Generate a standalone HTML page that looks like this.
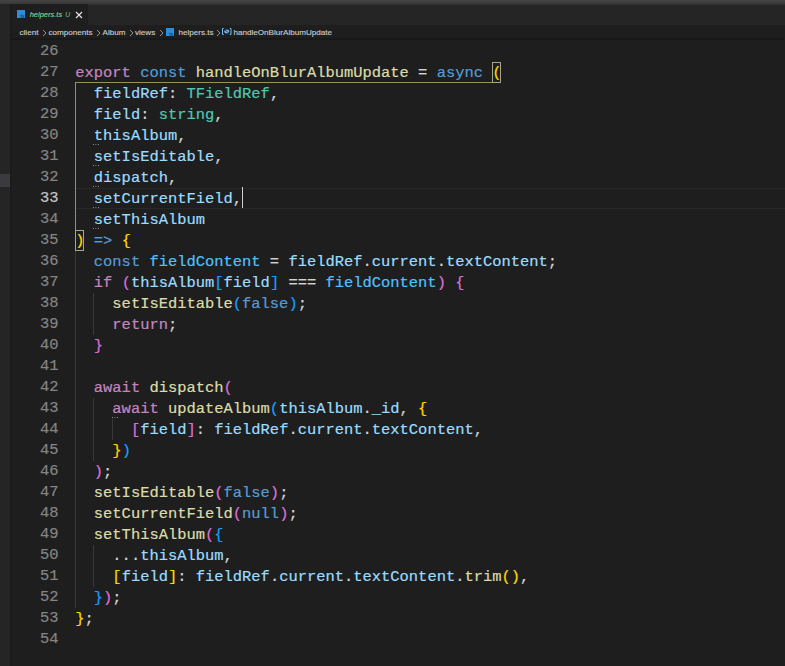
<!DOCTYPE html>
<html><head><meta charset="utf-8"><style>
*{margin:0;padding:0;box-sizing:border-box}
html,body{width:785px;height:666px;overflow:hidden;background:#1e1e1e}
body{position:relative;font-family:"Liberation Sans",sans-serif}
.topstrip{position:absolute;left:0;top:0;width:785px;height:5px;background:linear-gradient(#444 0,#3c3c3c 3px,#2e2e2e 5px)}
.tabbar{position:absolute;left:0;top:5px;width:785px;height:21px;background:#252526}
.side{position:absolute;left:0;top:4px;width:10px;height:662px;background:#252526}
.sideedge{position:absolute;left:10px;top:4px;width:2px;height:662px;background:#1b1b1b}
.sidehl{position:absolute;left:0;top:174px;width:10px;height:13px;background:#3a3a3f}
.tab{position:absolute;left:10px;top:4px;width:78px;height:21px;background:#1e1e1e}
.crumbs{position:absolute;left:12px;top:25px;width:773px;height:15px;background:#1e1e1e}
.shadow{position:absolute;left:11px;top:38px;width:773px;height:2px;background:#181818}
.ln,.cl{position:absolute;height:21px;line-height:21px;font-family:"Liberation Mono",monospace;font-size:15.45px;white-space:pre;-webkit-text-stroke:0.2px currentColor}
.ln{left:19px;width:39.5px;text-align:right;color:#858585}
.ln.cur{color:#c6c6c6}
.cl{left:75.3px;color:#d4d4d4;padding-top:1px}
.kw{color:#c586c0} .st{color:#569cd6} .fn{color:#dcdcaa} .v{color:#9cdcfe} .c{color:#4fc1ff} .ty{color:#4ec9b0} .p{color:#d4d4d4}
.b1,.b1box{color:#ffd700} .b2{color:#da70d6} .b3{color:#179fff}
.box{position:absolute;width:9px;height:21px;border:1px solid #a8a488}
.curline{position:absolute;left:75px;top:188px;width:721px;height:21px;border-top:1px solid #282828;border-bottom:1px solid #282828}
.cursor{position:absolute;left:242px;top:187px;width:1px;height:21px;background:#d0d0d0}
.hint{position:absolute;width:7px;height:1px;background-image:linear-gradient(90deg,#9a9a9a 40%,transparent 40%);background-size:2.5px 1px}
.ig{position:absolute;width:1px;background:#383838}
.bg{position:absolute;background:#9c8f5c}
.crumb{position:absolute;top:26.2px;height:13px;line-height:13px;font-size:8.1px;color:#c8c8c8;-webkit-text-stroke:0.15px currentColor;white-space:pre}
.chev{position:absolute;top:28.5px}
.tsicon{position:absolute;background:#2b8ddb;overflow:hidden}
.tsicon span{position:absolute;right:0.5px;bottom:-1.5px;font-size:4.5px;font-weight:bold;color:#0d3d66;line-height:5px}
.tablabel{position:absolute;height:12px;line-height:12px;font-size:7.5px;font-style:italic;color:#7fcf92;-webkit-text-stroke:0.15px currentColor;white-space:pre}
.tabU{position:absolute;height:12px;line-height:12px;font-size:6.8px;font-style:italic;color:#73c991}
</style></head><body>
<div class="topstrip"></div>
<div class="tabbar"></div>
<div class="tab"></div>
<div class="side"></div>
<div class="sideedge"></div>
<div class="sidehl"></div>
<div class="crumbs"></div>
<div class="shadow"></div>

<div class="tsicon" style="left:16.6px;top:9.7px;width:8.4px;height:8.2px"><span>ts</span></div>
<div class="tablabel" style="left:29.7px;top:9.3px">helpers.ts</div>
<div class="tabU" style="left:65.3px;top:9.4px">U</div>
<svg style="position:absolute;left:75px;top:10.5px" width="8" height="8" viewBox="0 0 8 8"><path d="M1 1L7 7M7 1L1 7" stroke="#e8e8e8" stroke-width="1.1"/></svg>
<div class="crumb" style="left:19.5px">client</div>
<svg class="chev" style="left:42px" width="5" height="8" viewBox="0 0 5 8"><path d="M1 1L4 4L1 7" fill="none" stroke="#b0b0b0" stroke-width="0.8"/></svg>
<div class="crumb" style="left:48.5px">components</div>
<svg class="chev" style="left:96px" width="5" height="8" viewBox="0 0 5 8"><path d="M1 1L4 4L1 7" fill="none" stroke="#b0b0b0" stroke-width="0.8"/></svg>
<div class="crumb" style="left:102.5px">Album</div>
<svg class="chev" style="left:129px" width="5" height="8" viewBox="0 0 5 8"><path d="M1 1L4 4L1 7" fill="none" stroke="#b0b0b0" stroke-width="0.8"/></svg>
<div class="crumb" style="left:135px">views</div>
<svg class="chev" style="left:158.5px" width="5" height="8" viewBox="0 0 5 8"><path d="M1 1L4 4L1 7" fill="none" stroke="#b0b0b0" stroke-width="0.8"/></svg>
<div class="tsicon" style="left:165.9px;top:28px;width:7.9px;height:7.7px"><span>ts</span></div>
<div class="crumb" style="left:178.5px">helpers.ts</div>
<svg class="chev" style="left:215.5px" width="5" height="8" viewBox="0 0 5 8"><path d="M1 1L4 4L1 7" fill="none" stroke="#b0b0b0" stroke-width="0.8"/></svg>
<svg style="position:absolute;left:222.3px;top:27.9px" width="10" height="7" viewBox="0 0 10 7"><path d="M1.7 0.5H0.5V6.5H1.7M7.8 0.5H9V6.5H7.8" fill="none" stroke="#75beff" stroke-width="1"/><ellipse cx="4.75" cy="3.5" rx="2.5" ry="2.1" fill="#78b8f2"/><path d="M3 2.2L6.5 4.7" stroke="#143060" stroke-width="0.9"/></svg>
<div class="crumb" style="left:233.5px">handleOnBlurAlbumUpdate</div>
<div class="curline"></div>
<div class="ig" style="left:93px;top:293px;height:42px"></div><div class="ig" style="left:93px;top:398px;height:63px"></div><div class="ig" style="left:112px;top:419px;height:21px"></div><div class="ig" style="left:93px;top:545px;height:42px"></div><div class="ig" style="left:75px;top:251px;height:357px"></div>
<div class="bg" style="left:75px;top:82px;width:417px;height:1px"></div>
<div class="bg" style="left:75px;top:82px;width:1px;height:148px"></div>
<div class="box" style="left:492px;top:62px"></div>
<div class="box" style="left:75px;top:230px"></div>
<div class="ln" style="top:41px">26</div>
<div class="cl" style="top:41px"></div>
<div class="ln" style="top:62px">27</div>
<div class="cl" style="top:62px"><span class="kw">export</span><span class="p"> </span><span class="st">const</span><span class="p"> </span><span class="fn">handleOnBlurAlbumUpdate</span><span class="p"> = </span><span class="st">async</span><span class="p"> </span><span class="b1box">(</span></div>
<div class="ln" style="top:83px">28</div>
<div class="cl" style="top:83px"><span class="p">  </span><span class="v">fieldRef</span><span class="p">: </span><span class="ty">TFieldRef</span><span class="p">,</span></div>
<div class="ln" style="top:104px">29</div>
<div class="cl" style="top:104px"><span class="p">  </span><span class="v">field</span><span class="p">: </span><span class="ty">string</span><span class="p">,</span></div>
<div class="ln" style="top:125px">30</div>
<div class="cl" style="top:125px"><span class="p">  </span><span class="v">thisAlbum</span><span class="p">,</span></div>
<div class="ln" style="top:146px">31</div>
<div class="cl" style="top:146px"><span class="p">  </span><span class="v">setIsEditable</span><span class="p">,</span></div>
<div class="ln" style="top:167px">32</div>
<div class="cl" style="top:167px"><span class="p">  </span><span class="v">dispatch</span><span class="p">,</span></div>
<div class="ln cur" style="top:188px">33</div>
<div class="cl" style="top:188px"><span class="p">  </span><span class="v">setCurrentField</span><span class="p">,</span></div>
<div class="ln" style="top:209px">34</div>
<div class="cl" style="top:209px"><span class="p">  </span><span class="v">setThisAlbum</span></div>
<div class="ln" style="top:230px">35</div>
<div class="cl" style="top:230px"><span class="b1box">)</span><span class="p"> </span><span class="st">=&gt;</span><span class="p"> </span><span class="b1">{</span></div>
<div class="ln" style="top:251px">36</div>
<div class="cl" style="top:251px"><span class="p">  </span><span class="st">const</span><span class="p"> </span><span class="c">fieldContent</span><span class="p"> = </span><span class="v">fieldRef</span><span class="p">.</span><span class="v">current</span><span class="p">.</span><span class="v">textContent</span><span class="p">;</span></div>
<div class="ln" style="top:272px">37</div>
<div class="cl" style="top:272px"><span class="p">  </span><span class="kw">if</span><span class="p"> </span><span class="b2">(</span><span class="v">thisAlbum</span><span class="b3">[</span><span class="v">field</span><span class="b3">]</span><span class="p"> === </span><span class="c">fieldContent</span><span class="b2">)</span><span class="p"> </span><span class="b2">{</span></div>
<div class="ln" style="top:293px">38</div>
<div class="cl" style="top:293px"><span class="p">    </span><span class="fn">setIsEditable</span><span class="b3">(</span><span class="st">false</span><span class="b3">)</span><span class="p">;</span></div>
<div class="ln" style="top:314px">39</div>
<div class="cl" style="top:314px"><span class="p">    </span><span class="kw">return</span><span class="p">;</span></div>
<div class="ln" style="top:335px">40</div>
<div class="cl" style="top:335px"><span class="p">  </span><span class="b2">}</span></div>
<div class="ln" style="top:356px">41</div>
<div class="cl" style="top:356px"></div>
<div class="ln" style="top:377px">42</div>
<div class="cl" style="top:377px"><span class="p">  </span><span class="kw">await</span><span class="p"> </span><span class="fn">dispatch</span><span class="b2">(</span></div>
<div class="ln" style="top:398px">43</div>
<div class="cl" style="top:398px"><span class="p">    </span><span class="kw">await</span><span class="p"> </span><span class="fn">updateAlbum</span><span class="b3">(</span><span class="v">thisAlbum</span><span class="p">.</span><span class="v">_id</span><span class="p">, </span><span class="b1">{</span></div>
<div class="ln" style="top:419px">44</div>
<div class="cl" style="top:419px"><span class="p">      </span><span class="b2">[</span><span class="v">field</span><span class="b2">]</span><span class="p">: </span><span class="v">fieldRef</span><span class="p">.</span><span class="v">current</span><span class="p">.</span><span class="v">textContent</span><span class="p">,</span></div>
<div class="ln" style="top:440px">45</div>
<div class="cl" style="top:440px"><span class="p">    </span><span class="b1">}</span><span class="b3">)</span></div>
<div class="ln" style="top:461px">46</div>
<div class="cl" style="top:461px"><span class="p">  </span><span class="b2">)</span><span class="p">;</span></div>
<div class="ln" style="top:482px">47</div>
<div class="cl" style="top:482px"><span class="p">  </span><span class="fn">setIsEditable</span><span class="b2">(</span><span class="st">false</span><span class="b2">)</span><span class="p">;</span></div>
<div class="ln" style="top:503px">48</div>
<div class="cl" style="top:503px"><span class="p">  </span><span class="fn">setCurrentField</span><span class="b2">(</span><span class="st">null</span><span class="b2">)</span><span class="p">;</span></div>
<div class="ln" style="top:524px">49</div>
<div class="cl" style="top:524px"><span class="p">  </span><span class="fn">setThisAlbum</span><span class="b2">(</span><span class="b3">{</span></div>
<div class="ln" style="top:545px">50</div>
<div class="cl" style="top:545px"><span class="p">    ...</span><span class="v">thisAlbum</span><span class="p">,</span></div>
<div class="ln" style="top:566px">51</div>
<div class="cl" style="top:566px"><span class="p">    </span><span class="b1">[</span><span class="v">field</span><span class="b1">]</span><span class="p">: </span><span class="v">fieldRef</span><span class="p">.</span><span class="v">current</span><span class="p">.</span><span class="v">textContent</span><span class="p">.</span><span class="fn">trim</span><span class="b1">()</span><span class="p">,</span></div>
<div class="ln" style="top:587px">52</div>
<div class="cl" style="top:587px"><span class="p">  </span><span class="b3">}</span><span class="b2">)</span><span class="p">;</span></div>
<div class="ln" style="top:608px">53</div>
<div class="cl" style="top:608px"><span class="b1">}</span><span class="p">;</span></div>
<div class="ln" style="top:629px">54</div>
<div class="cl" style="top:629px"></div>
<div class="hint" style="top:144px;left:93px"></div><div class="hint" style="top:165px;left:93px"></div><div class="hint" style="top:186px;left:93px"></div><div class="hint" style="top:207px;left:93px"></div><div class="hint" style="top:228px;left:93px"></div><div class="hint" style="top:417px;left:112px"></div>
<div class="cursor"></div>
</body></html>
